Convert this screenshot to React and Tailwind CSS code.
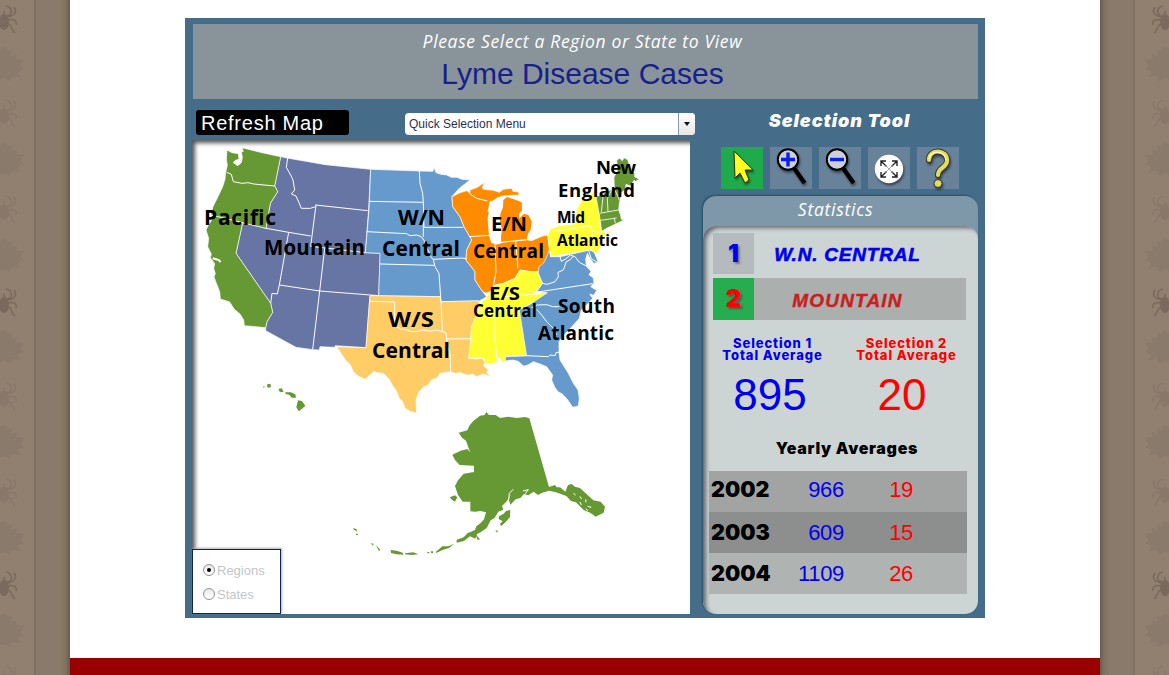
import React from "react";

const BLACK = "font-['Inter'] font-black";

function Spider({ y, dark }) {
  return (
    <g transform={`translate(4 ${y})`} opacity={dark ? 0.8 : 0.28} stroke="#75655a" fill="#75655a">
      <ellipse cx="0" cy="2" rx="5" ry="8" stroke="none" />
      <path d="M0-6V-9M3-4C10-5 8-13 2-14M4-3C12-5 13-9 10-13M4 0C12-2 13 3 12 5M3 4C8 3 7 11 11 13" fill="none" strokeWidth="1.6" />
    </g>
  );
}

function Leaf({ y }) {
  return (
    <path
      transform={`translate(0 ${y})`}
      d="M0-15L5-17L8-13L12-14L11-8L17-10L16-5L24-4L20 2L24 5L17 8L21 13L12 12L10 17L4 14L0 15Z"
      fill="#837366"
      opacity=".5"
    />
  );
}

function SideStrip({ right }) {
  const base = [20, 303, 586];
  return (
    <aside className={right ? "flex w-[69px] shrink-0 -scale-x-100 bg-[#8a7a6b]" : "flex w-[70px] shrink-0 bg-[#8a7a6b]"}>
      <div className="w-[34px] shrink-0 overflow-hidden bg-[#918070]">
        <svg width="34" height="675" className="block">
          {base.map((b) => (
            <g key={b}>
              <Spider y={b} dark />
              <Leaf y={b + 44} />
              <Spider y={b + 94} />
              <Leaf y={b + 139} />
              <Spider y={b + 190} />
              <Leaf y={b + 235} />
            </g>
          ))}
        </svg>
      </div>
      <div className="w-[2px] bg-[#7f7062]" />
      <div className="flex-1 bg-linear-to-r from-[#8a7a6b] from-70% via-[#81725f] via-88% to-[#655b50]" />
    </aside>
  );
}

const G = "#669933";
const M = "#6675a3";
const B = "#6699cc";
const O = "#ff8c00";
const W = "#ffcc66";
const Y = "#ffff33";

function Label({ x, y, size, w, fit, children }) {
  return (
    <text x={x} y={y} fontSize={size} textLength={w} lengthAdjust={fit ? "spacingAndGlyphs" : "spacing"} fontFamily="Open Sans, Noto Sans, sans-serif" fontWeight="700" fill="#000">
      {children}
    </text>
  );
}

function UsMap() {
  const line = { fill: "none", stroke: "#fff", strokeWidth: 3, strokeLinejoin: "round" };
  return (
    <svg className="block" width="498" height="474" viewBox="192 140 498 474">
      <g transform="translate(192 140) scale(.33333)" stroke="#fff" strokeWidth="2">
        <path fill={M} d="M266 50L285 54L400 74L536 88L530 210L520 338L565 340L560 467L534 468L522 623L430 617L428 622L384 620L382 630L362 629L312 622L221 572L221 563L225 545L242 517L236 490L132 340L152 248L222 265L235 190L257 155L248 138Z" />
        <path fill={G} d="M105 30L120 38L139 41L141 58L130 61L124 68L137 77L148 68L151 52L148 37L154 34L150 23L210 38L266 50L248 138L257 155L235 190L222 265L152 248L132 340L236 490L242 517L225 545L221 563L157 557L155 540L144 522L127 508L113 486L85 477L83 455L72 427L66 410L70 401L65 385L68 371L55 353L58 342L47 320L50 295L42 270L48 258L59 240L57 221L63 200L78 170L92 140L99 118L101 98L106 75L103 57Z" />
        <path {...line} strokeWidth="6" d="M62 355L80 360L86 366" />
        <path {...line} d="M104 97L118 103L124 125L150 130L168 128L185 132L248 138M57 225L152 248M287 54L283 82L296 105L303 120L308 150L298 162L312 168L322 190L328 205L355 205L370 200M370 195L527 212M372 195L356 319L520 338M222 265L290 277L356 288M290 277L262 435L256 462L240 460L236 490M262 435L383 453L560 467M398 325L383 453L362 629" />
      </g>
      <g transform="translate(360 140) scale(.33333)" stroke="#fff" strokeWidth="2">
        <path fill={B} d="M32 88L178 93L219 94L222 82L228 98L242 103L260 105L274 112L290 112L306 118L330 120L298 145L286 158L276 170L278 200L300 230L312 260L330 290L335 300L320 330L318 360L345 395L345 420L368 455L380 470L360 483L243 485L240 470L56 467L60 340L16 338L27 210Z" />
        <path fill={W} d="M30 467L240 470L243 485L355 482L362 495L355 520L335 560L332 598L336 620L326 655L350 657L368 655L376 668L370 676L385 690L380 698L395 710L370 702L350 710L338 702L325 706L300 698L286 700L270 695L240 700L232 713L215 720L205 734L190 741L176 757L168 780L170 820L151 814L135 805L128 785L118 775L108 750L100 740L86 716L70 700L50 698L42 694L30 705L15 718L-7 707L-20 695L-28 675L-43 661L-55 643L-70 620L18 623L24 540Z" />
        <path fill={O} d="M276 170L300 158L320 152L330 159L330 150L352 142L375 127L366 143L372 148L400 151L418 157L430 148L455 145L459 154L475 156L478 165L455 166L425 170L411 174L403 184L390 184L384 215L388 214L384 235L388 288L395 308L410 312L430 306L467 303L500 299L515 302L545 289L563 285L570 340L563 362L550 375L545 393L532 395L510 395L480 390L465 415L430 430L405 435L400 450L378 460L368 455L345 420L345 395L318 360L320 330L335 300L312 260L300 230L278 200Z" />
        <path fill="#fff" stroke="none" d="M392 186L410 174L435 165L440 172L425 184L421 204L426 290L418 307L398 309L390 288L385 235Z" />
        <path fill={O} stroke="none" d="M430 180L441 171L468 180L485 187L486 211L477 222L477 236L492 221L505 225L515 244L512 269L504 281L500 299L467 303L424 307L423 291L426 266L420 245L421 222L429 201Z" />
        <path fill={Y} d="M362 492L378 470L400 453L405 435L430 430L465 415L480 390L510 395L532 395L548 430L530 450L530 457L562 458L538 480L510 493L482 512L500 600L500 645L435 650L437 664L425 668L421 655L414 656L410 668L390 672L375 672L372 655L326 655L332 598L335 560L352 520Z" />
        <path {...line} d="M27 184L190 187M178 93L180 130L188 160L190 187L192 262L310 262M20 275L140 281L150 287L170 285L184 290L192 301L197 319L207 336L213 352L220 358L307 354L320 357M60 372L222 376M190 240L190 290M220 358L225 380L237 400L243 485M30 484L104 486L104 555L121 567L135 568L150 574L170 575L190 570L210 574L230 570L258 578L260 597L332 596M243 485L247 572M260 597L263 620L270 640L272 695M328 290L390 286M405 312L408 395L400 440M467 304L474 385M410 312L430 306L500 299M328 160L350 175L382 183M362 480L430 470L545 461M360 510L484 510M406 512L405 600L412 668" />
      </g>
      <g transform="translate(520 140) scale(.33333)" stroke="#fff" strokeWidth="2">
        <path fill={B} d="M92 350L120 350L210 330L222 335L234 365L222 371L210 355L202 340L197 357L199 379L213 394L207 404L220 414L222 430L212 440L230 451L221 466L209 462L218 475L205 490L184 510L178 535L153 563L131 586L117 605L117 638L120 660L145 700L160 730L174 750L178 775L175 798L158 802L143 779L126 761L114 755L104 741L95 720L98 705L80 680L60 672L40 665L24 675L10 678L-5 664L-22 660L-45 663L-43 650L20 648L-2 510L35 490L82 458L50 455L68 430L55 400L57 380L70 370L80 351L88 330Z" />
        <path fill={Y} d="M83 285L90 268L115 258L165 252L169 212L186 177L198 180L225 150L240 225L243 272L255 280L287 265L265 282L244 290L243 315L232 342L210 330L92 350Z" />
        <path fill={G} d="M228 170L283 145L282 112L293 90L290 60L299 55L307 62L312 53L323 59L335 97L344 99L344 110L358 118L344 126L343 120L331 138L318 133L317 148L305 157L298 190L296 211L301 223L304 238L313 240L293 249L260 265L245 274L240 235Z" />
        <path {...line} d="M40 458L218 431M68 430L82 433L105 425L115 410L114 397L130 390L139 365L151 359L160 348M120 350L124 364L139 356L151 345L165 350L178 367L199 378M35 503L52 495L80 494L98 500L118 500M50 508L65 525L80 545L100 565L110 585M20 647L85 650L90 645L105 647L108 638L118 636M205 330L214 356L230 366" />
        <path {...line} strokeWidth="2.5" d="M98 275L210 257L217 272L242 280M215 275L217 291L224 301L212 328M239 220L295 210M242 241L290 234M250 161L244 217M277 147L262 175L264 215M283 234L286 250M283 145L298 180" />
      </g>
      <g transform="translate(340 400) scale(.33333)" fill={G}>
        <path d="M356 98L382 91L389 76L400 63L420 47L434 45L439 36L447 45L467 45L480 54L505 50L530 54L555 51L568 55L627 261L645 255L650 262L660 262L676 275L684 255L695 252L705 260L720 264L736 279L760 301L782 305L795 320L791 338L767 350L752 339L731 330L708 307L693 303L679 288L648 277L627 272L607 278L594 285L581 275L565 286L552 282L541 294L527 298L511 314L506 297L514 279L501 303L486 318L490 329L475 335L463 355L452 361L440 384L423 396L411 402L406 416L390 409L372 423L350 428L350 419L371 412L382 400L405 390L409 379L422 369L432 358L438 337L422 333L405 335L391 334L391 305L368 305L354 285L345 258L354 241L371 221L402 216L402 197L359 195L345 180L337 164L362 152L382 147L390 156L378 122L366 113Z" />
        <path d="M477 349L491 341L498 333L511 330L510 351L497 366L483 379L480 371L488 364L476 357ZM329 292L345 286L352 292L345 305L337 301ZM288 455L307 439L325 439L343 431L327 444L309 449L289 459ZM40 384L50 388L51 394L41 389ZM48 401H54V405H48ZM92 430L101 431L99 437ZM107 435L121 449L117 453ZM152 450L170 452L188 458L190 464L170 463L153 459ZM194 460L220 457L235 463L214 465L196 463ZM262 456H268V460H262ZM273 454H279V459H273ZM406 402L420 418L413 420ZM466 392L473 391L472 398Z" />
        <path fill="none" stroke="#fff" strokeWidth="3" d="M506 300L508 280L520 268M549 273L565 269L556 281M701 279L706 286M719 289L725 297M737 298L738 307M720 306L724 315M743 319L754 322M737 326L744 332" />
      </g>
      <g transform="translate(185 370) scale(.33333)" fill={G}>
        <circle cx="252" cy="47" r="6" />
        <path d="M233 51L238 48L238 53ZM280 57L290 55L296 65L285 67ZM301 67L317 67L331 73L333 83L320 83L314 75L302 72ZM339 91L351 93L361 107L353 115L341 124L334 112Z" />
      </g>
      <Label x="204" y="225" size="21" w="72">Pacific</Label>
      <Label x="264" y="255" size="20.5" w="101">Mountain</Label>
      <Label x="398" y="225" size="21" w="47" fit>W/N</Label>
      <Label x="382" y="256" size="21" w="78">Central</Label>
      <Label x="491" y="231" size="19.5" w="36" fit>E/N</Label>
      <Label x="473" y="258" size="19" w="71">Central</Label>
      <Label x="489" y="300" size="18" w="31" fit>E/S</Label>
      <Label x="473" y="317" size="17" w="64">Central</Label>
      <Label x="388" y="327" size="21" w="46" fit>W/S</Label>
      <Label x="372" y="358" size="21" w="78">Central</Label>
      <Label x="596" y="174" size="18.5" w="40">New</Label>
      <Label x="558" y="197" size="18.5" w="77">England</Label>
      <Label x="557" y="223" size="15.5" w="28">Mid</Label>
      <Label x="557" y="246" size="15.5" w="61">Atlantic</Label>
      <Label x="558" y="313" size="19" w="57">South</Label>
      <Label x="538" y="340" size="19" w="76">Atlantic</Label>
    </svg>
  );
}

function Tool({ active, children }) {
  return (
    <div className={active ? "h-[42px] w-[42px] bg-[#1faa4b]" : "h-[42px] w-[42px] bg-[#68829a]"}>
      <svg width="42" height="42" viewBox="0 0 42 42" className="block overflow-visible drop-shadow-[1px_2px_1px_rgba(0,0,0,0.5)]">
        {children}
      </svg>
    </div>
  );
}

function Magnifier({ minus }) {
  return (
    <>
      <path d="M24 21L34.5 36" stroke="#000" strokeWidth="4.2" />
      <circle cx="18" cy="12.5" r="10.2" fill="#ccd0d8" stroke="#000" strokeWidth="1.9" />
      <path d={minus ? "M11 12.5H25" : "M11 12.5H25M18 5.5V19.5"} stroke="#0a1cf0" strokeWidth="3.4" />
    </>
  );
}

function YearRow({ year, a, b, className }) {
  return (
    <div className={`flex h-[41px] items-center ${className}`}>
      <div className={`${BLACK} w-[70px] pl-[2px] text-[21.5px]`}>{year}</div>
      <div className="w-[65px] text-right text-[22px] tracking-[-0.3px] text-[#0000ee]">{a}</div>
      <div className="w-[69px] text-right text-[22px] tracking-[-0.3px] text-[#ff0000]">{b}</div>
    </div>
  );
}

function Radio({ on, children }) {
  return (
    <div className="flex h-6 items-center gap-[2px] pl-[10px] text-[13px] text-[#c3c6c9]">
      <span className="flex h-3 w-3 items-center justify-center rounded-full border border-[#8b9490] bg-linear-to-b from-[#e8eaea] to-white">
        {on && <span className="h-1 w-1 rounded-full bg-black" />}
      </span>
      {children}
    </div>
  );
}

export default function App() {
  return (
    <div className="flex h-[675px] w-[1169px] overflow-hidden bg-white font-['Liberation_Sans',sans-serif] leading-none text-black">
      <SideStrip />
      <main className="flex w-[1030px] shrink-0 flex-col justify-between">
        <section className="mt-[18px] ml-[115px] flex h-[600px] w-[800px] flex-col bg-[#456d89] pt-[6px] pr-[7px] pb-1 pl-2">
          <header className="flex h-[75px] shrink-0 flex-col items-center bg-[#88939a] pr-[6px]">
            <p className="mt-[7px] font-['Open_Sans',sans-serif] text-[17.5px] leading-[20px] tracking-[0.66px] whitespace-nowrap text-white italic">Please Select a Region or State to View</p>
            <h1 className="mt-[7px] text-[30px] leading-[32px] whitespace-nowrap text-[#17208c]">Lyme Disease Cases</h1>
          </header>
          <div className="flex min-h-0 flex-1">
            <div className="-ml-px flex w-[498px] shrink-0 flex-col">
              <div className="flex h-[41px] shrink-0 items-start pt-[11px] pl-1">
                <button className="flex h-[25px] w-[153px] shrink-0 items-center rounded-[3px] bg-black pl-[5px] text-[20px] leading-none tracking-[0.75px] text-white">Refresh Map</button>
                <div className="mt-[3px] ml-[56px] flex h-[22px] w-[290px] shrink-0 items-center rounded bg-white text-[12px] text-[#2a2f55]">
                  <span className="flex-1 pl-[4px]">Quick Selection Menu</span>
                  <span className="flex h-full w-[17px] items-center justify-center rounded-r border-l border-[#8c979d] bg-linear-to-b from-white to-[#e4e6e7]">
                    <span className="border-x-[3px] border-t-4 border-x-transparent border-t-[#111]" />
                  </span>
                </div>
              </div>
              <div className="relative h-[474px] bg-white shadow-[inset_4px_4px_4px_-1px_#555]">
                <UsMap />
                <div className="absolute bottom-0 left-0 h-[65px] w-[89px] border border-[#10244f] bg-white pt-[8px] shadow-[1px_-1px_2px_#aab]">
                  <Radio on>Regions</Radio>
                  <Radio>States</Radio>
                </div>
              </div>
            </div>
            <div className="flex flex-1 flex-col pl-[13px]">
              <h2 className={`${BLACK} mt-[12px] h-[20px] pr-[2px] text-center text-[18px] leading-[20px] tracking-[1px] text-white italic`}>Selection Tool</h2>
              <div className="mt-[16px] flex gap-[7px] pl-[18px]">
                <Tool active>
                  <path d="M13 4L32 23L24 23L28 33L24 36L19 26L14 31Z" fill="#ffff22" stroke="#332" strokeWidth="1" />
                </Tool>
                <Tool><Magnifier /></Tool>
                <Tool><Magnifier minus /></Tool>
                <Tool>
                  <circle cx="21" cy="22" r="14.2" fill="#fff" />
                  <path d="M13 19V14H18M24 14H29V19M13 25V30H18M24 30H29V25M13.5 14.5L18.5 19.5M28.5 14.5L23.5 19.5M13.5 29.5L18.5 24.5M28.5 29.5L23.5 24.5" fill="none" stroke="#222" strokeWidth="1.4" />
                  <path d="M17 18L25 26M25 18L17 26" stroke="#888" strokeWidth=".7" />
                </Tool>
                <Tool>
                  <path d="M12 13C12 1 31 2 30 14C30 21 21 20 21 28" fill="none" stroke="#333322" strokeWidth="6" strokeLinecap="round" />
                  <path d="M12 13C12 1 31 2 30 14C30 21 21 20 21 28" fill="none" stroke="#e2dc62" strokeWidth="4.2" strokeLinecap="round" />
                  <path d="M12 12C13 2 29 4 29 13" fill="none" stroke="#fffbb8" strokeWidth="1.2" />
                  <circle cx="21" cy="36.5" r="4" fill="#e2dc62" stroke="#333322" />
                </Tool>
              </div>
              <div className="mt-[7px] h-[418px] w-[275px] overflow-hidden rounded-[13px] bg-[#7e98a9] shadow-[-1px_-1px_2px_#2c4c63]">
                <div className="flex h-[30px] items-center justify-center pr-[10px] pb-[2px] font-['Open_Sans',sans-serif] text-[17.5px] tracking-[0.75px] text-white italic">Statistics</div>
                <div className="h-[388px] rounded-[13px] bg-[#cdd4d4] pt-[7px] shadow-[inset_4px_3px_4px_-1px_#646b70]">
                  <div className="ml-[10px] flex h-[41px] w-[253px]">
                    <div className={`${BLACK} flex w-[41px] items-center justify-center bg-[#b5bbbd] text-[24px] text-[#0000ee] text-shadow-[2px_2px_2px_#777]`}>1</div>
                    <div className="flex flex-1 items-center justify-center pt-[2px] pr-[25px] text-[19px] font-bold tracking-[0.8px] text-[#0000ee] italic [-webkit-text-stroke:0.6px_#0000ee]">W.N. CENTRAL</div>
                  </div>
                  <div className="mt-[4px] ml-[10px] flex h-[42px] w-[253px] bg-[#abafae]">
                    <div className={`${BLACK} flex w-[41px] items-center justify-center bg-[#25ad50] text-[24px] text-[#ff0000] text-shadow-[2px_2px_2px_#555]`}>2</div>
                    <div className="flex flex-1 items-center justify-center pt-[2px] pr-[25px] text-[19px] font-bold tracking-[1.2px] text-[#c82020] italic [-webkit-text-stroke:0.4px_#c82020]">MOUNTAIN</div>
                  </div>
                  <div className="mt-[17px] flex text-center font-['Inter'] text-[13px] leading-[12px] font-extrabold tracking-[0.9px] whitespace-nowrap">
                    <div className="w-[139px] text-[#0000ee]">Selection 1<br />Total Average</div>
                    <div className="w-[129px] text-[#ff0000]">Selection 2<br />Total Average</div>
                  </div>
                  <div className="mt-[12px] flex h-[44px] items-center text-center text-[44px]">
                    <div className="w-[134px] text-[#0000ee]">895</div>
                    <div className="w-[130px] text-[#ff0000]">20</div>
                  </div>
                  <div className={`${BLACK} mt-[21px] h-[20px] pl-[13px] text-center text-[16px] leading-[20px] tracking-[0.7px]`}>Yearly Averages</div>
                  <div className="mt-[13px] ml-[6px] w-[258px]">
                    <YearRow year="2002" a="966" b="19" className="bg-[#a2a4a3] pb-[3px]" />
                    <YearRow year="2003" a="609" b="15" className="bg-[#8c8f8e]" />
                    <YearRow year="2004" a="1109" b="26" className="bg-[#afb3b2]" />
                  </div>
                </div>
              </div>
            </div>
          </div>
        </section>
        <footer className="h-[17px] bg-[#990000]" />
      </main>
      <SideStrip right />
    </div>
  );
}
